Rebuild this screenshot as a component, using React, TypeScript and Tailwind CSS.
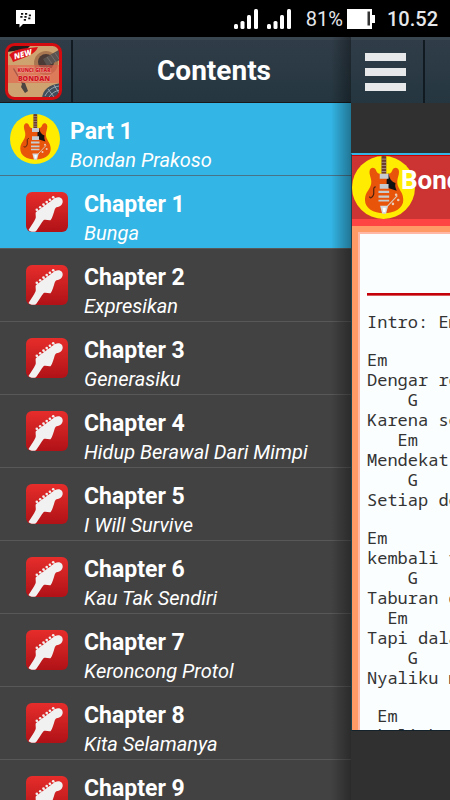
import React from "react";

const chapters = [
  { title: "Chapter 1", song: "Bunga" },
  { title: "Chapter 2", song: "Expresikan" },
  { title: "Chapter 3", song: "Generasiku" },
  { title: "Chapter 4", song: "Hidup Berawal Dari Mimpi" },
  { title: "Chapter 5", song: "I Will Survive" },
  { title: "Chapter 6", song: "Kau Tak Sendiri" },
  { title: "Chapter 7", song: "Keroncong Protol" },
  { title: "Chapter 8", song: "Kita Selamanya" },
  { title: "Chapter 9", song: "" },
];

const stanzas = [
  "Intro: Em",
  "Em\nDengar re\n    G\nKarena se\n   Em\nMendekat\n    G\nSetiap de",
  "Em\nkembali t\n    G\nTaburan d\n  Em\nTapi dala\n    G\nNyaliku m",
  " Em\n kali kad",
];

function ElectricGuitar({ className }: { className: string }) {
  return (
    <svg viewBox="0 0 50 50" className={className} aria-hidden="true">
      <defs>
        <clipPath id="disc">
          <circle cx="25" cy="25" r="25" />
        </clipPath>
      </defs>
      <circle cx="25" cy="25" r="25" fill="#ffec00" />
      <g clipPath="url(#disc)">
        <path
          d="M22.5 14C20 14.5 19.6 12.5 18.8 10.8C17.8 8.8 15.2 8.6 14.2 11C13.4 13 14.3 15.5 15 18C15.6 20.5 15.4 22.5 14.2 25C12.6 28 10.3 30 10.3 35C10.3 41.5 17 45.5 25.3 45.5C33.8 45.5 40.7 41.5 40.7 35C40.7 30 38.4 28 37 25C35.8 22.5 35.7 20.5 36.2 18C36.9 15.5 37.8 13 37 11C36 8.6 33.3 8.8 32.3 10.8C31.5 12.5 31 14.5 28.5 14Z"
          fill="#e8540a"
        />
        <path d="M29 13.5C29.5 18 31.5 20.5 34.5 21.5C34 24 34.5 25.5 35.5 27.5L27.5 25V19Z" fill="#111" />
        <path d="M23.4 0H27.2V14H23.4Z" fill="#6b3a2e" />
        <path d="M23.4 2.5H27.2M23.4 5H27.2M23.4 7.5H27.2M23.4 10H27.2M23.4 12.3H27.2" stroke="#b5a69b" strokeWidth="0.6" />
        <path d="M22 14H29V18H22ZM22 22.3H29V26H22Z" fill="#c6cbd0" />
        <path d="M21 28.5H29.5M21 32.3H29.5" stroke="#c6cbd0" strokeWidth="1.8" />
        <path d="M21 35.5H29.5" stroke="#c6cbd0" strokeWidth="1.4" />
        <path d="M22.3 39.5H28.7L27 45.8H24Z" fill="#d5dade" />
        <path d="M24.4 41H26.8L26.4 44.5H24.8Z" fill="#fff" />
        <path d="M28 40L36 31.5" stroke="#d8c8bb" strokeWidth="0.9" />
        <g fill="#eccbb6">
          <circle cx="35" cy="30.8" r="1" />
          <circle cx="36.7" cy="35" r="1" />
          <circle cx="32.5" cy="38" r="1" />
        </g>
        <path d="M18.8 24.5C16 24.5 18 29 17 31C16 33.5 14 33.8 14 32.2" fill="none" stroke="#46200f" strokeWidth="0.9" />
      </g>
    </svg>
  );
}

function HeadstockIcon() {
  return (
    <svg viewBox="0 0 42 40" className="h-10 w-[42px] shrink-0" aria-hidden="true">
      <defs>
        <linearGradient id="tile" x1="0" y1="0" x2="0" y2="1">
          <stop offset="0" stopColor="#e62d2b" />
          <stop offset="1" stopColor="#b01217" />
        </linearGradient>
      </defs>
      <rect width="42" height="40" rx="6" fill="url(#tile)" />
      <path
        d="M2.5 38C5 34 8 30 9.5 26.5C10.3 24.5 9 21.5 10 20L27 7.5C29 5 34 4 36 7C37.8 10 36 14.5 31.5 15C28.5 15.5 28.8 18.5 27.5 21.5C26.8 23.5 26 26.5 24.5 28.3C22 28.7 19.5 27 17.5 28.3C15 31.5 12.5 36 10 39.2C7.5 40.4 4 39.8 2.5 38Z"
        fill="#f1f1f1"
      />
      <path d="M11 18L13 20.5M14.5 15.5L16.5 18M18 13L20 15.5M21 10.5L23 13M24.5 8L26.5 10.5M27.5 5.5L29.5 8" stroke="#f1f1f1" strokeWidth="0.8" />
      <g fill="#f1f1f1">
        <circle cx="10.8" cy="17.8" r="1.3" />
        <circle cx="14.2" cy="15.2" r="1.3" />
        <circle cx="17.5" cy="12.6" r="1.3" />
        <circle cx="20.7" cy="10.1" r="1.3" />
        <circle cx="23.9" cy="7.7" r="1.3" />
        <circle cx="27.2" cy="5.2" r="1.3" />
      </g>
    </svg>
  );
}

function AppIcon() {
  return (
    <svg viewBox="0 0 57 57" className="size-[57px]" role="img" aria-label="Kunci Gitar Bondan">
      <defs>
        <clipPath id="cover">
          <rect x="2" y="2" width="53" height="53" rx="7" />
        </clipPath>
      </defs>
      <g clipPath="url(#cover)">
        <rect width="57" height="57" fill="#cfa36f" />
        <path d="M2 2H26L22 6L2 9Z" fill="#221c1c" />
        <circle cx="41" cy="20" r="12" fill="#a87650" />
        <circle cx="41" cy="19" r="8" fill="#4b3a35" />
        <path d="M38 16L57 5V16L42 23Z" fill="#5a5350" />
        <path d="M42 14L47 21M46 12L51 19M50 10L54 16" stroke="#8c837d" strokeWidth="0.6" />
        <path d="M8 26L17 41L16 44L20 50L23 48L20 40L17 39L9 25Z" fill="#4c4541" />
        <path d="M37 55C38 46 45 41 57 40V57H37Z" fill="#414e5b" />
        <path d="M40 53C43 47 48 44 54 43M44 54C47 50 50 48 55 47M49 42L54 50M43 46L49 54" fill="none" stroke="#a3afb9" strokeWidth="0.9" />
        <rect y="22" width="57" height="18" fill="#e2604d" opacity="0.6" />
        <path d="M4 12C12 4 22 6 33 4C30 12 20 14 8 19C7 16 6 14 4 12Z" fill="#dd1118" />
      </g>
      <rect x="1.5" y="1.5" width="54" height="54" rx="8" fill="none" stroke="#d40b0f" strokeWidth="3" />
      <g fontFamily="Open Sans, sans-serif" fontWeight="800" textAnchor="middle">
        <text x="18" y="14" fontSize="8" fontStyle="italic" fill="#fff" transform="rotate(-16 18 12)">
          NEW
        </text>
        <g fill="#d0161f" stroke="#f0a094" strokeWidth="0.8" paintOrder="stroke">
          <text x="29" y="29" fontSize="5">
            KUNCI GITAR
          </text>
          <text x="29" y="38" fontSize="7">
            BONDAN
          </text>
        </g>
      </g>
    </svg>
  );
}

function Signal() {
  return (
    <svg viewBox="0 0 24 20" className="h-5 w-6" aria-hidden="true">
      <g fill="#fff">
        <rect x="0" y="15" width="4" height="5" rx="1.5" />
        <rect x="6.5" y="12" width="4" height="8" rx="1.5" />
        <rect x="13" y="6" width="4" height="14" rx="1.5" />
        <rect x="20" y="0" width="4" height="20" rx="1.5" />
      </g>
    </svg>
  );
}

function StatusBar() {
  return (
    <div className="flex h-[37px] shrink-0 items-center bg-black pr-3 pl-4 text-xl text-gray-200">
      <svg viewBox="0 0 20 18" className="mr-auto h-[18px] w-5" aria-hidden="true">
        <path d="M0 0H19V14H7L3.5 17.5V14H0Z" fill="#fff" />
        <path
          d="M5 3.8H7.2M9 3.8H11.2M4.3 6.8H6.5M8.4 6.8H10.6M12.8 5.3H15M12.2 8.3H14.4M7.8 9.8H10"
          stroke="#111"
          strokeWidth="1.7"
        />
      </svg>
      <div className="flex gap-[9px]">
        <Signal />
        <Signal />
      </div>
      <span className="ml-[15px]">81%</span>
      <svg viewBox="0 0 28 20" className="ml-1 h-5 w-7" aria-hidden="true">
        <path d="M0 0H25V6H28V14H25V20H0Z" fill="#fff" />
        <path d="M20.5 2.5H23V16.5H20.5Z" fill="#333" />
      </svg>
      <span className="ml-3 font-medium">10.52</span>
    </div>
  );
}

function RowText({ title, subtitle }: { title: string; subtitle: string }) {
  return (
    <span className="flex flex-col pt-[15px] leading-7 whitespace-nowrap">
      <span className="text-[23px] font-bold">{title}</span>
      <span className="text-xl italic">{subtitle}</span>
    </span>
  );
}

function Drawer() {
  return (
    <aside className="relative flex w-[78%] shrink-0 flex-col overflow-hidden bg-[#424242]">
      <header className="flex h-[66px] shrink-0 border-t-3 border-b border-t-[#394650] border-b-[#17191a] bg-linear-to-b from-[#303d48] to-[#253640]">
        <div className="flex w-[71px] items-center pt-px pl-[5px]">
          <AppIcon />
        </div>
        <div className="flex flex-1 items-center justify-center border-l-2 border-[#111a20] pl-1">
          <h1 className="text-[28px] font-bold">Contents</h1>
        </div>
      </header>
      <nav className="flex flex-col">
        <a href="#part-1" className="flex h-[73px] shrink-0 gap-2.5 border-b border-[#48748a] bg-[#33b5e5] pl-2.5">
          <ElectricGuitar className="mt-[11px] size-[50px] shrink-0" />
          <RowText title="Part 1" subtitle="Bondan Prakoso" />
        </a>
        {chapters.map((chapter, i) => (
          <a
            key={chapter.title}
            href={`#chapter-${i + 1}`}
            className={`flex h-[73px] shrink-0 gap-4 border-b border-[#585858] pl-[26px] ${i === 0 ? "bg-[#33b5e5]" : ""}`}
          >
            <span className="mt-4">
              <HeadstockIcon />
            </span>
            <RowText title={chapter.title} subtitle={chapter.song} />
          </a>
        ))}
      </nav>
      <div className="pointer-events-none absolute inset-y-0 right-0 w-5 bg-linear-to-r from-transparent to-black/35" />
    </aside>
  );
}

function SongPage() {
  return (
    <main className="flex min-w-0 flex-1 flex-col overflow-hidden bg-[#303030]">
      <header className="flex h-[66px] shrink-0 border-t-3 border-[#394650] bg-linear-to-b from-[#303d48] to-[#253640]">
        <button aria-label="Menu" className="flex w-[74px] flex-col gap-[7px] border-r-2 border-[#111a20] pt-[13px] pl-3.5">
          <span className="h-2 w-[41px] bg-[#e6e8e9]" />
          <span className="h-2 w-[41px] bg-[#e6e8e9]" />
          <span className="h-2 w-[41px] bg-[#e6e8e9]" />
        </button>
      </header>
      <section className="mt-[50px] mb-[69px] flex min-h-0 flex-1 flex-col overflow-hidden border-t-2 border-b border-l border-t-[#33b5e5] border-b-[#14232b] border-l-[#1d4250]">
        <div className="flex h-[71px] shrink-0 border-t border-b-7 border-t-[#cc0000] border-b-[#ff4444] bg-[#cc3333]">
          <ElectricGuitar className="size-[63px] shrink-0" />
          <h2 className="-ml-3.5 pt-1.5 text-[26px] leading-9 font-bold">Bondan</h2>
        </div>
        <div className="flex-1 overflow-hidden bg-[#ff9966] pt-1.5 pl-1.5">
          <div className="border-t-2 border-l-2 border-[#ffb8a5] bg-[#fafeff] pl-[7px]">
            <hr className="mt-[59px] h-[3px] border-t-2 border-b border-t-[#c4000a] border-b-[#d85a5a]" />
            <div className="flex flex-col gap-[18px] pt-4 font-['Noto_Sans_Mono','DejaVu_Sans_Mono',monospace] text-[17px] leading-5 text-[#333]">
              {stanzas.map((stanza) => (
                <pre key={stanza} className="font-[inherit]">
                  {stanza}
                </pre>
              ))}
            </div>
          </div>
        </div>
      </section>
    </main>
  );
}

export default function App() {
  return (
    <div className="flex h-screen flex-col overflow-hidden bg-[#303030] font-[Roboto,sans-serif] text-white">
      <StatusBar />
      <div className="flex min-h-0 flex-1">
        <Drawer />
        <SongPage />
      </div>
    </div>
  );
}
